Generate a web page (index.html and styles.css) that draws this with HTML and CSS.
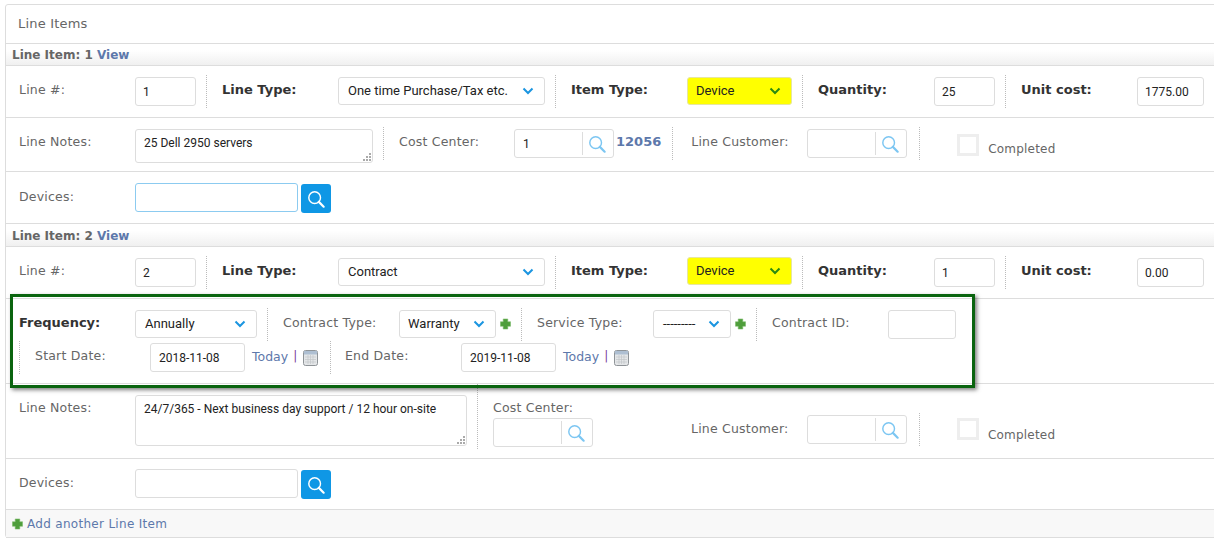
FILE: index.html
```html
<!DOCTYPE html>
<html lang="en">
<head>
  <meta charset="UTF-8" />
  <title>Line Items</title>
  <link rel="stylesheet" href="styles.css">
</head>
<body>
  <svg class="icon-defs" aria-hidden="true">
    <symbol id="i-search" viewBox="0 0 20 20">
      <circle cx="8.5" cy="8.5" r="6.5" fill="none" stroke="currentColor" stroke-width="1.6" />
      <path d="M13.2 13.2 18.5 18.5" fill="none" stroke="currentColor" stroke-width="2.4" stroke-linecap="round" />
    </symbol>
    <symbol id="i-chevron" viewBox="0 0 12 8">
      <path d="M1.5 1.5 6 6l4.500-4.500" fill="none" stroke="currentColor" stroke-width="2" />
    </symbol>
    <symbol id="i-plus" viewBox="0 0 12 12">
      <path d="M3.500 0.500h5v3h3v5h-3v3h-5v-3h-3v-5h3z" fill="#4f9e3c" stroke="#7dbb6b" stroke-width="0.6" stroke-linejoin="round" />
    </symbol>
    <symbol id="i-cal" viewBox="0 0 15 16">
      <rect x="0.500" y="0.500" width="14" height="15" rx="2" fill="#e4e6e8" stroke="#8f9498" />
      <rect x="1" y="1" width="13" height="3.500" fill="#aebfd2" />
      <path d="M2 7h11M2 9.500h11M2 12h11M5 5v9M7.500 5v9M10 5v9" stroke="#c3c6c9" stroke-width="0.7" />
    </symbol>
  </svg>

  <div class="panel">
    <div class="panel-title">Line Items</div>

    <div class="item-bar">Line Item: 1 <a class="link">View</a></div>

    <div class="row row-main">
      <div class="field">
        <label class="lbl">Line #:</label>
        <input class="inp w61" value="1" />
      </div>
      <div class="field">
        <label class="lbl strong">Line Type:</label>
        <div class="select w207"><span>One time Purchase/Tax etc.</span><svg class="chev"><use href="#i-chevron" /></svg></div>
      </div>
      <div class="field">
        <label class="lbl strong">Item Type:</label>
        <div class="select w105 hilite"><span>Device</span><svg class="chev"><use href="#i-chevron" /></svg></div>
      </div>
      <div class="field">
        <label class="lbl strong">Quantity:</label>
        <input class="inp w61" value="25" />
      </div>
      <div class="field last">
        <label class="lbl strong">Unit cost:</label>
        <input class="inp w67" value="1775.00" />
      </div>
    </div>

    <div class="row row-notes">
      <div class="field">
        <label class="lbl">Line Notes:</label>
        <textarea class="notes w238">25 Dell 2950 servers</textarea>
      </div>
      <div class="field wide-gap">
        <label class="lbl w115">Cost Center:</label>
        <div class="lookup"><input class="lookup-inp" value="1" /><span class="lookup-btn"><svg class="mag"><use href="#i-search" /></svg></span></div>
        <a class="link code">12056</a>
      </div>
      <div class="field pad12">
        <label class="lbl">Line Customer:</label>
        <div class="lookup"><input class="lookup-inp" /><span class="lookup-btn"><svg class="mag"><use href="#i-search" /></svg></span></div>
      </div>
      <div class="done">
        <input class="check" type="checkbox" />
        <span class="done-txt">Completed</span>
      </div>
    </div>

    <div class="row row-dev">
      <label class="lbl">Devices:</label>
      <input class="inp w163 focused" />
      <button class="search-btn"><svg class="mag-w"><use href="#i-search" /></svg></button>
    </div>

    <div class="item-bar bar2">Line Item: 2 <a class="link">View</a></div>

    <div class="row row-main">
      <div class="field">
        <label class="lbl">Line #:</label>
        <input class="inp w61" value="2" />
      </div>
      <div class="field">
        <label class="lbl strong">Line Type:</label>
        <div class="select w207"><span>Contract</span><svg class="chev"><use href="#i-chevron" /></svg></div>
      </div>
      <div class="field">
        <label class="lbl strong">Item Type:</label>
        <div class="select w105 hilite big"><span>Device</span><svg class="chev"><use href="#i-chevron" /></svg></div>
      </div>
      <div class="field">
        <label class="lbl strong">Quantity:</label>
        <input class="inp w61" value="1" />
      </div>
      <div class="field last">
        <label class="lbl strong">Unit cost:</label>
        <input class="inp w67" value="0.00" />
      </div>
    </div>

    <div class="row-contract">
      <div class="contract-line">
        <div class="field">
          <label class="lbl strong">Frequency:</label>
          <div class="select w122"><span>Annually</span><svg class="chev"><use href="#i-chevron" /></svg></div>
        </div>
        <div class="field">
          <label class="lbl w116">Contract Type:</label>
          <div class="select w97"><span>Warranty</span><svg class="chev"><use href="#i-chevron" /></svg></div>
          <svg class="plus"><use href="#i-plus" /></svg>
        </div>
        <div class="field">
          <label class="lbl">Service Type:</label>
          <div class="select w78"><span>---------</span><svg class="chev"><use href="#i-chevron" /></svg></div>
          <svg class="plus"><use href="#i-plus" /></svg>
        </div>
        <div class="field last">
          <label class="lbl">Contract ID:</label>
          <input class="inp w68" />
        </div>
      </div>
      <div class="contract-line dates">
        <div class="field date-first">
          <label class="lbl">Start Date:</label>
          <input class="inp w95" value="2018-11-08" />
          <a class="link today">Today</a><span class="pipe">|</span>
          <svg class="cal"><use href="#i-cal" /></svg>
        </div>
        <div class="field last">
          <label class="lbl">End Date:</label>
          <input class="inp w95" value="2019-11-08" />
          <a class="link today">Today</a><span class="pipe">|</span>
          <svg class="cal"><use href="#i-cal" /></svg>
        </div>
      </div>
    </div>

    <div class="row row-notes2">
      <div class="field notes-field">
        <label class="lbl">Line Notes:</label>
        <textarea class="notes w332 tall">24/7/365 - Next business day support / 12 hour on-site</textarea>
      </div>
      <div class="stack">
        <label class="lbl">Cost Center:</label>
        <div class="lookup"><input class="lookup-inp" /><span class="lookup-btn"><svg class="mag"><use href="#i-search" /></svg></span></div>
      </div>
      <div class="field pad12 low">
        <label class="lbl">Line Customer:</label>
        <div class="lookup"><input class="lookup-inp" /><span class="lookup-btn"><svg class="mag"><use href="#i-search" /></svg></span></div>
      </div>
      <div class="done low2">
        <input class="check" type="checkbox" />
        <span class="done-txt">Completed</span>
      </div>
    </div>

    <div class="row row-dev alt">
      <label class="lbl">Devices:</label>
      <input class="inp w163" />
      <button class="search-btn"><svg class="mag-w"><use href="#i-search" /></svg></button>
    </div>

    <div class="panel-foot">
      <svg class="plus foot-plus"><use href="#i-plus" /></svg>
      <a class="link add">Add another Line Item</a>
    </div>
  </div>
</body>
</html>
```

FILE: styles.css
```css
* {
  box-sizing: border-box;
}
html, body {
  overflow: hidden;
}
body {
  margin: 0;
  padding: 4px 0 0 5px;
  width: 1214px;
  background: #fff;
  font-family: "DejaVu Sans", sans-serif;
  font-size: 12px;
  color: #666;
}
.icon-defs {
  display: none;
}
.panel {
  width: 1240px;
  height: 534px;
  border: 1px solid #ddd;
  border-radius: 3px 0 0 3px;
}
.panel-title {
  height: 39px;
  padding: 9px 0 0 12px;
  font-size: 13px;
  line-height: 20px;
  border-bottom: 1px solid #ddd;
  letter-spacing: 0.2px;
}
.item-bar {
  height: 22px;
  padding-left: 6px;
  line-height: 22px;
  font-weight: bold;
  font-size: 12px;
  border-bottom: 1px solid #ddd;
  background: linear-gradient(#fff 30%, #f0f0f0);
}
.bar2 {
  height: 23px;
  line-height: 24px;
}
.link {
  color: #5d78ab;
  text-decoration: none;
}
.row {
  display: flex;
  align-items: flex-start;
  padding-left: 13px;
  border-bottom: 1px solid #ddd;
}
.row-main {
  height: 52px;
  padding-top: 9px;
}
.row-notes {
  height: 54px;
  padding-top: 9px;
}
.row-dev {
  height: 52px;
  padding-top: 9px;
}
.row-dev.alt {
  height: 51px;
  padding-top: 8px;
}
.row-notes2 {
  height: 75px;
}
.field {
  display: flex;
  align-items: flex-start;
  padding-right: 10px;
  margin-right: 15px;
  border-right: 1px dotted #bbb;
  height: 33px;
}
.field.last {
  border-right: 0;
}
.field.pad12 {
  padding-right: 12px;
}
.field.wide-gap {
  padding-right: 11px;
  margin-right: 18px;
}
.lbl {
  width: 116px;
  flex: none;
  font-size: 12.500px;
  line-height: 30px;
  letter-spacing: 0.2px;
}
.row-dev .lbl {
  line-height: 32px;
}
.lbl.strong {
  font-size: 13px;
  font-weight: bold;
  color: #333;
  letter-spacing: 0;
}
.lbl.w115 {
  width: 115px;
}
.inp, .lookup-inp, .notes {
  font-family: "Roboto", sans-serif;
  font-size: 12px;
  color: #222;
  background: #fff;
  outline: none;
}
.inp {
  height: 29px;
  margin-top: 2px;
  padding: 0 9px 0 7px;
  border: 1px solid #ddd;
  border-radius: 3px;
}
.focused {
  border-color: #8ccbf0;
}
.w61 { width: 61px; }
.w67 { width: 67px; }
.w68 { width: 68px; }
.w95 { width: 95px; padding-left: 8px; }
.w163 { width: 163px; }
.select {
  display: flex;
  align-items: center;
  justify-content: space-between;
  height: 28px;
  margin-top: 2px;
  padding: 0 10px 0 9px;
  border: 1px solid #ddd;
  border-radius: 3px;
  font-family: "Roboto", sans-serif;
  font-size: 13px;
  color: #222;
  flex: none;
}
.select span {
  margin-top: -2px;
}
.w207 { width: 207px; }
.w105 { width: 105px; padding-left: 8px; }
.w122 { width: 122px; }
.w97 { width: 97px; padding-left: 8px; }
.w78 { width: 78px; }
.hilite {
  background: #ff0;
  border-color: #e6e6a0;
  color: #222;
}
.hilite.big {
  margin-top: 1px;
}
.chev {
  width: 12px;
  height: 8px;
  color: #1b95e0;
}
.hilite .chev {
  color: #2a8a10;
}
.notes {
  display: block;
  height: 34px;
  margin-top: 2px;
  padding: 6px 8px 0;
  border: 1px solid #ddd;
  border-radius: 3px;
  resize: vertical;
  overflow: hidden;
}
.notes::-webkit-resizer {
  background:
    linear-gradient(#aaa, #aaa) 12px 6px / 2px 2px no-repeat,
    linear-gradient(#aaa, #aaa) 9px 9px / 2px 2px no-repeat,
    linear-gradient(#aaa, #aaa) 12px 9px / 2px 2px no-repeat,
    linear-gradient(#aaa, #aaa) 6px 12px / 2px 2px no-repeat,
    linear-gradient(#aaa, #aaa) 9px 12px / 2px 2px no-repeat,
    linear-gradient(#aaa, #aaa) 12px 12px / 2px 2px no-repeat;
}
.w238 { width: 238px; }
.w332 { width: 332px; }
.notes.tall {
  height: 51px;
  margin-top: 11px;
}
.lookup {
  display: flex;
  width: 100px;
  height: 29px;
  margin-top: 2px;
  flex: none;
  border: 1px solid #ddd;
  border-radius: 3px;
}
.lookup-inp {
  width: 67px;
  height: 27px;
  padding: 0 8px;
  border: 0;
  background: transparent;
}
.lookup-btn {
  flex: 1;
  margin: 2px 0;
  display: flex;
  align-items: center;
  justify-content: center;
  border-left: 1px solid #ddd;
}
.mag {
  width: 18px;
  height: 18px;
  margin-left: -2px;
  color: #7cc6f2;
}
.code {
  margin: 7px 0 0 2px;
  font-weight: bold;
  font-size: 13px;
}
.done {
  display: flex;
  align-items: flex-start;
  margin-left: 22px;
  height: 33px;
}
.check {
  appearance: none;
  width: 22px;
  height: 22px;
  margin: 7px 9px 0 0;
  border: 3px solid #eee;
  background: #fff;
}
.done-txt {
  margin-top: 14px;
  line-height: 16px;
  letter-spacing: 0.2px;
}
.search-btn {
  display: flex;
  align-items: center;
  justify-content: center;
  width: 30px;
  height: 29px;
  margin: 3px 0 0 3px;
  padding: 0;
  border: 0;
  border-radius: 3px;
  background: #0f97e5;
}
.mag-w {
  width: 18px;
  height: 18px;
  color: #fff;
}
.row-contract {
  position: relative;
  height: 85px;
  padding-left: 13px;
  border-bottom: 1px solid #ddd;
}
.row-contract::after {
  content: "";
  position: absolute;
  left: 4px;
  top: -5px;
  width: 959px;
  height: 88px;
  border: 3px solid #0a640f;
  box-shadow: 2px 2px 4px rgba(0, 0, 0, 0.5);
  pointer-events: none;
}
.contract-line {
  display: flex;
  height: 42px;
  padding-top: 9px;
}
.plus {
  width: 11px;
  height: 12px;
  margin: 10px 0 0 4px;
  flex: none;
}
.dates {
  height: 33px;
  padding-top: 0;
}
.date-first {
  padding-left: 15px;
  border-left: 1px dotted #bbb;
  width: 312px;
  margin-right: 14px;
}
.date-first .lbl {
  width: 115px;
}
.today {
  margin: 8px 0 0 7px;
  font-size: 12.500px;
}
.pipe {
  margin: 8px 0 0 5px;
  color: #7a3f9a;
  font-size: 12px;
}
.cal {
  width: 15px;
  height: 16px;
  margin: 9px 0 0 6px;
  flex: none;
}
.notes-field {
  height: 65px;
}
.notes-field .lbl {
  margin-top: 12px;
  line-height: 24px;
}
.stack {
  width: 198px;
  padding-top: 12px;
}
.stack .lbl {
  display: block;
  line-height: 24px;
}
.stack .lookup {
  margin-top: -2px;
}
.low {
  margin-top: 29px;
}
.low .lbl {
  line-height: 32px;
}
.low2 {
  margin-top: 28px;
}
.low2 .check {
  margin-top: 6px;
}
.low2 .done-txt {
  margin-top: 15px;
}
.panel-foot {
  display: flex;
  align-items: center;
  height: 28px;
  padding-left: 6px;
  background: #f8f8f8;
  border-bottom: 1px solid #ddd;
}
.foot-plus {
  margin: 0 4px 0 0;
}
.add {
  letter-spacing: 0.3px;
}
```
